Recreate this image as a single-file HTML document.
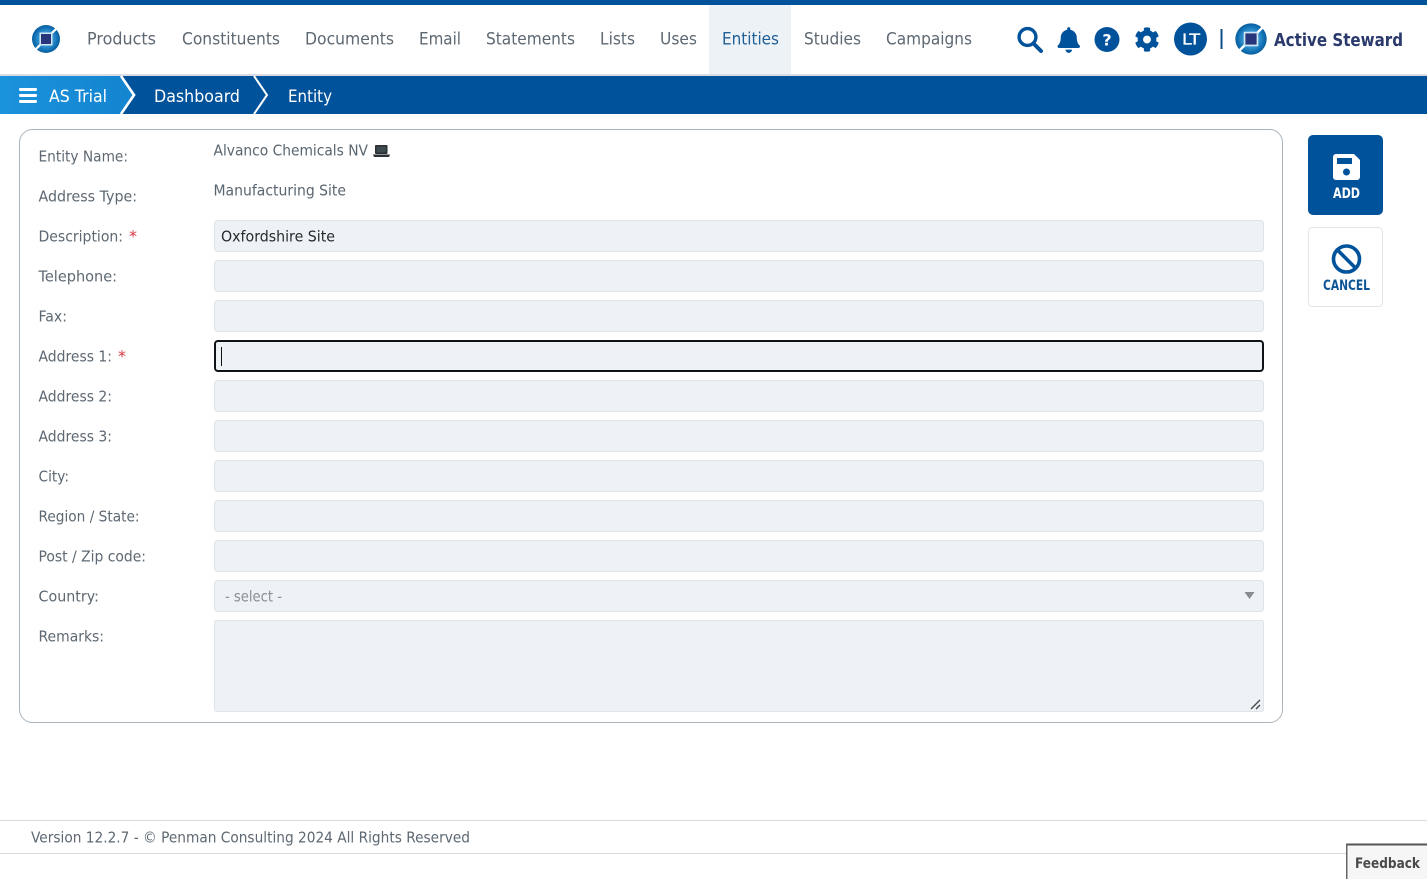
<!DOCTYPE html>
<html lang="en"><head><meta charset="utf-8"><title>Entity</title>
<style>
html,body{margin:0;padding:0;background:#fff;width:1427px;height:879px;overflow:hidden}
svg{position:absolute;left:0;top:0;display:block}
text{font-family:"DejaVu Sans","Liberation Sans",sans-serif}
.n{font-size:16.5px;fill:#5d6872}
.l{font-size:15.2px;fill:#5d6872}
.v{font-size:15.2px;fill:#59656f}
.w{font-size:17px;fill:#fff}
.s{fill:#eef1f6;stroke:#dfe3ea;stroke-width:1}
.r{font-size:16px;fill:#d9333f}
</style></head><body>
<svg width="1427" height="879" viewBox="0 0 1427 879" xmlns="http://www.w3.org/2000/svg">
<defs>
<radialGradient id="lg" cx="50%" cy="50%" r="52%"><stop offset="0" stop-color="#cfe9f8"/><stop offset=".4" stop-color="#3f9fdb"/><stop offset=".8" stop-color="#0f6fb2"/><stop offset="1" stop-color="#0a5a98"/></radialGradient>
<linearGradient id="as" x1="0" x2="1" y1="0" y2="0"><stop offset="0" stop-color="#1b92dc"/><stop offset="1" stop-color="#1384cf"/></linearGradient>
<g id="logo">
<circle r="14" fill="url(#lg)"/>
<path d="M14-14 L-14 14" stroke="#fff" stroke-width="2.2"/>
<rect x="-6.500" y="-6.500" width="13" height="13" fill="#cfe6f5"/>
<rect x="-5" y="-5" width="10" height="10" fill="#27367a"/>
</g>
</defs>
<rect width="1427" height="879" fill="#fff"/>
<rect width="1427" height="5" fill="#00529b"/>
<rect x="709" y="5" width="82" height="69" fill="#edf2f7"/>
<rect y="74" width="1427" height="2" fill="#d9dde3"/>
<rect y="76" width="1427" height="38" fill="#00529b"/>
<path d="M0 76H122L136 95 122 114H0Z" fill="url(#as)"/>
<path d="M121 76L134 95 121 114" fill="none" stroke="#fff" stroke-width="2.6"/>
<path d="M254 76L267 95 254 114" fill="none" stroke="#fff" stroke-width="2"/>
<use href="#logo" x="46" y="39"/>
<g>
<text class="n" x="87" y="44.500" textLength="69" lengthAdjust="spacingAndGlyphs">Products</text>
<text class="n" x="182" y="44.500" textLength="98" lengthAdjust="spacingAndGlyphs">Constituents</text>
<text class="n" x="305" y="44.500" textLength="89" lengthAdjust="spacingAndGlyphs">Documents</text>
<text class="n" x="419" y="44.500" textLength="42" lengthAdjust="spacingAndGlyphs">Email</text>
<text class="n" x="486" y="44.500" textLength="89" lengthAdjust="spacingAndGlyphs">Statements</text>
<text class="n" x="600" y="44.500" textLength="35" lengthAdjust="spacingAndGlyphs">Lists</text>
<text class="n" x="660" y="44.500" textLength="37" lengthAdjust="spacingAndGlyphs">Uses</text>
<text class="n" x="722" y="44.500" textLength="57" lengthAdjust="spacingAndGlyphs" style="fill:#1f5f96">Entities</text>
<text class="n" x="804" y="44.500" textLength="57" lengthAdjust="spacingAndGlyphs">Studies</text>
<text class="n" x="886" y="44.500" textLength="86" lengthAdjust="spacingAndGlyphs">Campaigns</text>
</g>
<circle cx="1027.500" cy="37" r="8.400" fill="none" stroke="#00529b" stroke-width="3.400"/>
<path d="M1033.500 43.500L1041 51" stroke="#00529b" stroke-width="4" stroke-linecap="round"/>
<svg x="1057.500" y="27" width="22.500" height="26" viewBox="0 0 448 512"><path fill="#00529b" d="M224 512c35.32 0 63.97-28.65 63.97-64H160.03c0 35.35 28.65 64 63.97 64zm215.39-149.71c-19.32-20.76-55.47-51.99-55.47-154.29 0-77.7-54.48-139.9-127.94-155.16V32c0-17.67-14.32-32-31.98-32s-31.98 14.33-31.98 32v20.84C118.56 68.1 64.08 130.3 64.08 208c0 102.3-36.15 133.53-55.47 154.29-6 6.45-8.66 14.16-8.61 21.71.11 16.4 12.98 32 32.1 32h383.8c19.12 0 32-15.6 32.1-32 .05-7.55-2.61-15.27-8.61-21.71z"/></svg>
<circle cx="1107" cy="39.500" r="12.500" fill="#00529b"/>
<text x="1107" y="45.500" text-anchor="middle" font-size="16" font-weight="700" fill="#fff">?</text>
<svg x="1134.500" y="26.500" width="25" height="26" viewBox="0 0 512 512"><path fill="#00529b" d="M487.4 315.7l-42.6-24.6c4.3-23.2 4.3-47 0-70.2l42.6-24.6c4.9-2.8 7.1-8.6 5.5-14-11.1-35.6-30-67.8-54.7-94.6-3.8-4.1-10-5.1-14.8-2.3L380.8 110c-17.9-15.4-38.5-27.3-60.8-35.1V25.8c0-5.6-3.9-10.5-9.4-11.7-36.7-8.2-74.3-7.8-109.2 0-5.5 1.2-9.4 6.1-9.4 11.7V75c-22.2 7.9-42.8 19.8-60.8 35.1L88.7 85.5c-4.9-2.8-11-1.9-14.8 2.3-24.7 26.7-43.6 58.9-54.7 94.6-1.7 5.4.6 11.2 5.5 14L67.3 221c-4.3 23.2-4.3 47 0 70.2l-42.6 24.6c-4.9 2.8-7.1 8.6-5.5 14 11.1 35.6 30 67.8 54.7 94.6 3.8 4.1 10 5.1 14.8 2.3l42.6-24.6c17.9 15.4 38.5 27.3 60.8 35.1v49.2c0 5.6 3.9 10.5 9.4 11.7 36.7 8.2 74.3 7.8 109.2 0 5.5-1.2 9.4-6.1 9.4-11.7v-49.2c22.2-7.9 42.8-19.8 60.8-35.1l42.6 24.6c4.9 2.8 11 1.900 14.8-2.3 24.7-26.7 43.6-58.9 54.7-94.6 1.5-5.5-.7-11.3-5.6-14.1zM256 336c-44.1 0-80-35.9-80-80s35.9-80 80-80 80 35.9 80 80-35.9 80-80 80z"/></svg>
<circle cx="1190.500" cy="39" r="16.500" fill="#00529b"/>
<text x="1182" y="44.500" font-size="15" fill="#fff" stroke="#fff" stroke-width=".35" textLength="18" lengthAdjust="spacingAndGlyphs">LT</text>
<rect x="1220.500" y="29" width="2" height="20" fill="#0d4f8b"/>
<use href="#logo" transform="translate(1251 39) scale(1.12)"/>
<text x="1274" y="46" font-size="17.500" font-weight="700" fill="#2b3a6c" textLength="129" lengthAdjust="spacingAndGlyphs">Active Steward</text>

<rect x="19" y="88" width="18" height="3" rx="1.200" fill="#fff"/><rect x="19" y="94" width="18" height="3" rx="1.200" fill="#fff"/><rect x="19" y="100" width="18" height="3" rx="1.200" fill="#fff"/>
<text class="w" x="49" y="102" textLength="58" lengthAdjust="spacingAndGlyphs">AS Trial</text>
<text class="w" x="154" y="102" textLength="86" lengthAdjust="spacingAndGlyphs">Dashboard</text>
<text class="w" x="288" y="102" textLength="44" lengthAdjust="spacingAndGlyphs">Entity</text>

<rect x="19.500" y="129.500" width="1263" height="593" rx="13" fill="#fff" stroke="#aab5bc"/>
<text class="l" x="38.500" y="161.500" textLength="89.500" lengthAdjust="spacingAndGlyphs">Entity Name:</text>
<text class="l" x="38.500" y="201.500" textLength="98.500" lengthAdjust="spacingAndGlyphs">Address Type:</text>
<text class="l" x="38.500" y="241.500" textLength="84.500" lengthAdjust="spacingAndGlyphs">Description:</text>
<text class="r" x="129" y="241.500" textLength="8" lengthAdjust="spacingAndGlyphs">*</text>
<text class="l" x="38.500" y="281.500" textLength="78.500" lengthAdjust="spacingAndGlyphs">Telephone:</text>
<text class="l" x="38.500" y="321.500" textLength="28.500" lengthAdjust="spacingAndGlyphs">Fax:</text>
<text class="l" x="38.500" y="361.500" textLength="73.500" lengthAdjust="spacingAndGlyphs">Address 1:</text>
<text class="r" x="118" y="361.500" textLength="8" lengthAdjust="spacingAndGlyphs">*</text>
<text class="l" x="38.500" y="401.500" textLength="73.500" lengthAdjust="spacingAndGlyphs">Address 2:</text>
<text class="l" x="38.500" y="441.500" textLength="73.500" lengthAdjust="spacingAndGlyphs">Address 3:</text>
<text class="l" x="38.500" y="481.500" textLength="30.500" lengthAdjust="spacingAndGlyphs">City:</text>
<text class="l" x="38.500" y="521.500" textLength="101" lengthAdjust="spacingAndGlyphs">Region / State:</text>
<text class="l" x="38.500" y="561.500" textLength="107.500" lengthAdjust="spacingAndGlyphs">Post / Zip code:</text>
<text class="l" x="38.500" y="601.500" textLength="60.500" lengthAdjust="spacingAndGlyphs">Country:</text>
<text class="l" x="38.500" y="641.500" textLength="65.500" lengthAdjust="spacingAndGlyphs">Remarks:</text>

<text class="v" x="213.500" y="155.500" textLength="154.500" lengthAdjust="spacingAndGlyphs">Alvanco Chemicals NV</text>
<rect x="375" y="145" width="12.500" height="9" rx="1" fill="#2a2f33"/><rect x="376.500" y="146.500" width="9.500" height="6" fill="#3d4a4f"/><path d="M373 154.500h17l-1 2.500h-15z" fill="#2a2f33"/>
<text class="v" x="213.500" y="195.500" textLength="132.500" lengthAdjust="spacingAndGlyphs">Manufacturing Site</text>

<rect class="s" x="214.500" y="220.500" width="1049" height="31" rx="3"/>
<text x="221" y="241.500" font-size="15.200" fill="#26292c" textLength="114" lengthAdjust="spacingAndGlyphs">Oxfordshire Site</text>
<rect class="s" x="214.500" y="260.500" width="1049" height="31" rx="3"/>
<rect class="s" x="214.500" y="300.500" width="1049" height="31" rx="3"/>
<rect x="215" y="341" width="1048" height="30" rx="3" fill="#eef1f6" stroke="#101418" stroke-width="2"/>
<rect x="221" y="347" width="1" height="19" fill="#111"/>
<rect class="s" x="214.500" y="380.500" width="1049" height="31" rx="3"/>
<rect class="s" x="214.500" y="420.500" width="1049" height="31" rx="3"/>
<rect class="s" x="214.500" y="460.500" width="1049" height="31" rx="3"/>
<rect class="s" x="214.500" y="500.500" width="1049" height="31" rx="3"/>
<rect class="s" x="214.500" y="540.500" width="1049" height="31" rx="3"/>
<rect class="s" x="214.500" y="580.500" width="1049" height="31" rx="3"/>
<text x="225" y="601.500" font-size="15.200" fill="#8a9097" textLength="57" lengthAdjust="spacingAndGlyphs">- select -</text>
<path d="M1244.500 592h10l-5 7z" fill="#888c90"/>
<rect class="s" x="214.500" y="620.500" width="1049" height="91" rx="2"/>
<path d="M1251 709L1260 700M1256 709L1260 705" stroke="#444" stroke-width="1.300"/>

<rect x="1308" y="135" width="75" height="80" rx="5" fill="#00529b"/>
<path d="M1336 154h18l6 6v17a3 3 0 0 1-3 3h-21a3 3 0 0 1-3-3v-20a3 3 0 0 1 3-3z" fill="#fff"/>
<rect x="1337" y="158" width="15" height="6" fill="#00529b"/>
<circle cx="1346.500" cy="172" r="3.500" fill="#00529b"/>
<text x="1333" y="198" font-size="14" font-weight="700" fill="#fff" textLength="27" lengthAdjust="spacingAndGlyphs">ADD</text>
<rect x="1308.500" y="227.500" width="74" height="79" rx="4" fill="#fff" stroke="#e1e5e9"/>
<circle cx="1346.500" cy="259" r="13" fill="none" stroke="#00529b" stroke-width="3.600"/>
<path d="M1337.500 250L1355.500 268" stroke="#00529b" stroke-width="3.600"/>
<text x="1323" y="290" font-size="14" font-weight="700" fill="#0d5596" textLength="47" lengthAdjust="spacingAndGlyphs">CANCEL</text>

<rect y="820" width="1427" height="1" fill="#d9dadb"/>
<text class="l" x="31" y="842.500" textLength="439" lengthAdjust="spacingAndGlyphs">Version 12.2.7 - © Penman Consulting 2024 All Rights Reserved</text>
<rect y="853" width="1346" height="1" fill="#d9dadb"/>
<rect x="1346" y="844" width="81" height="35" fill="#f6f6f6"/>
<rect x="1346" y="843.500" width="81" height="2" fill="#555"/>
<rect x="1346" y="844" width="1.500" height="35" fill="#666"/>
<text x="1355" y="868" font-size="14" font-weight="700" fill="#4a4a4a" textLength="65" lengthAdjust="spacingAndGlyphs">Feedback</text>
</svg>
</body></html>
